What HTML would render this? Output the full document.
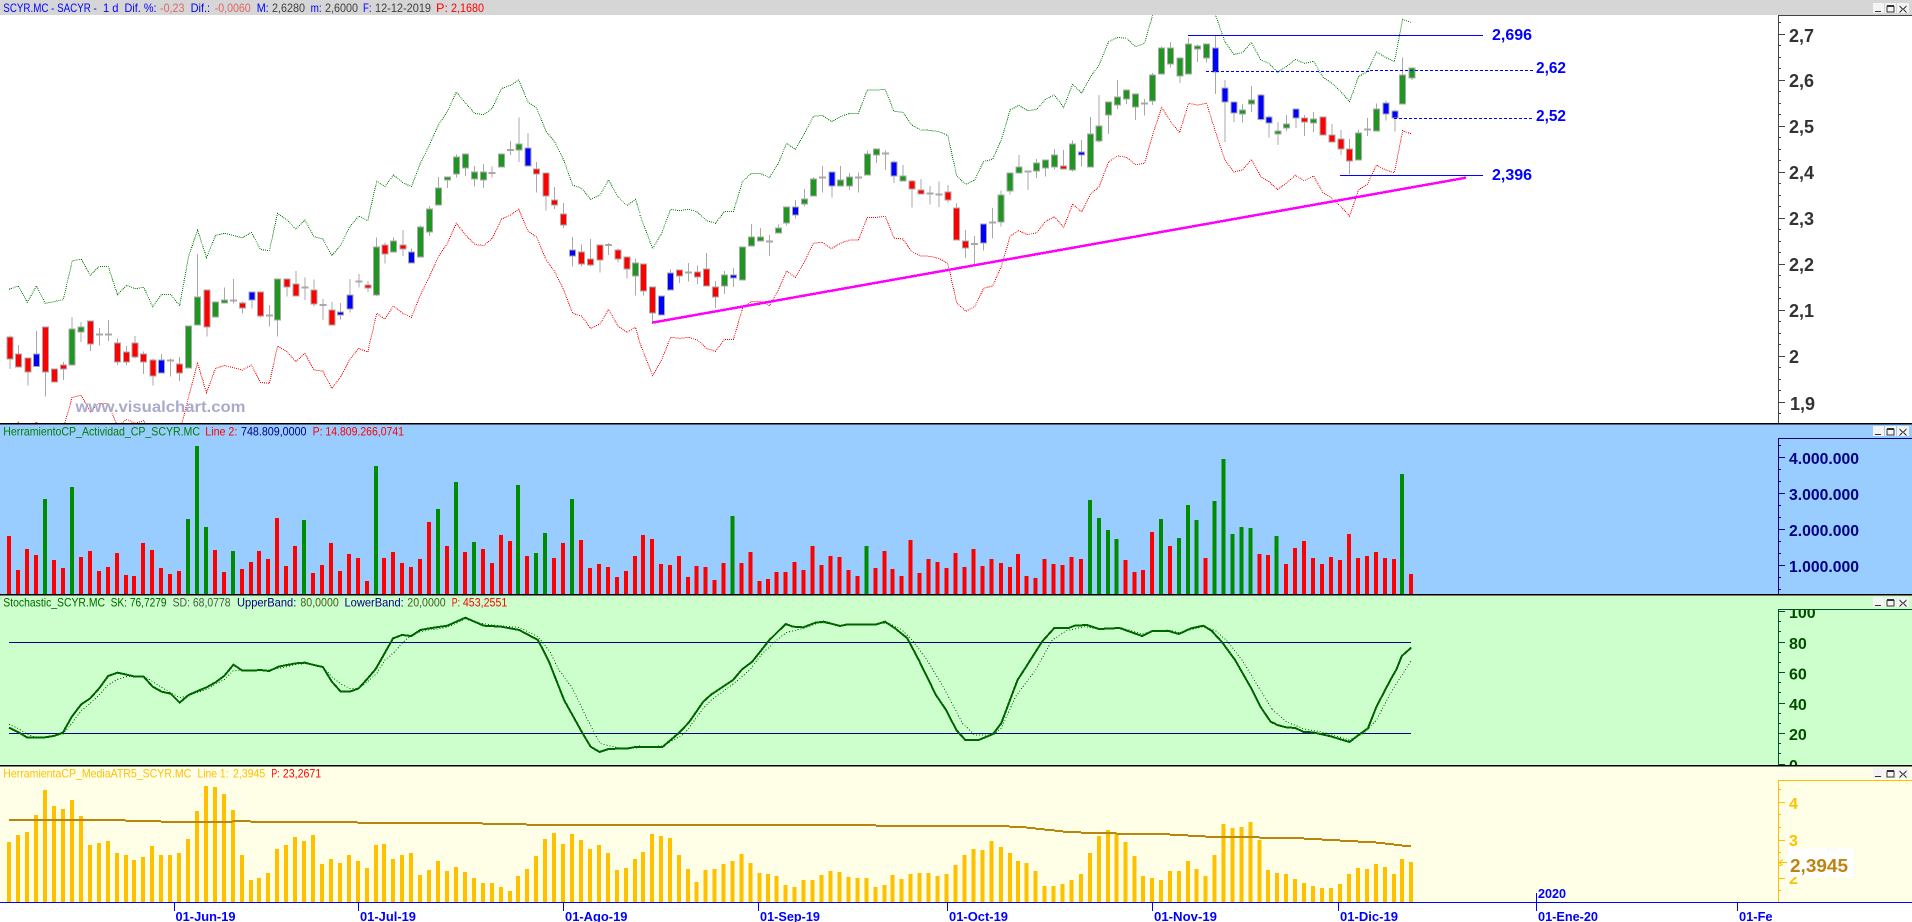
<!DOCTYPE html>
<html><head><meta charset="utf-8"><title>SCYR.MC</title>
<style>
html,body{margin:0;padding:0;background:#fff;overflow:hidden}
svg{display:block;font-family:"Liberation Sans",sans-serif}
path{vector-effect:non-scaling-stroke;fill:none}
text{white-space:pre}
.t{font-size:12px}
.ax{font-size:18px;font-weight:700;fill:#333}
.v{font-size:16px;font-weight:700;fill:#000080}
.s{font-size:16px;font-weight:700;fill:#004d00}
.y{font-size:16px;font-weight:700;fill:#ffc000}
.d{font-size:13px;font-weight:700;fill:#0000ff}
.l{font-size:16px;font-weight:700;fill:#0000ff}
.band-g{stroke:#008000;stroke-width:1;stroke-dasharray:1 1}
.band-r{stroke:#ff0000;stroke-width:1;stroke-dasharray:1 1}
.w{stroke:#a8a8a8;stroke-width:1}
.dj{stroke:#a8a8a8;stroke-width:7}
.o{stroke:#a8a8a8;stroke-width:7}
.gb{stroke:#1f961f;stroke-width:5}
.rb{stroke:#ff0000;stroke-width:5}
.bb{stroke:#0000ff;stroke-width:5}
.vr{stroke:#ff0000;stroke-width:4}
.vg{stroke:#008c00;stroke-width:4}
.at{stroke:#ffc000;stroke-width:4}
.al{stroke:#b8860b;stroke-width:2}
.sk{stroke:#006400;stroke-width:2}
.sd{stroke:#006400;stroke-width:1;stroke-dasharray:1 2}
</style></head>
<body>
<svg width="1912" height="922" viewBox="0 0 1912 922" shape-rendering="crispEdges">
<defs>
<g id="btn">
<rect x="1873" y="0" width="11" height="10" fill="#f4f4f4"/>
<rect x="1885" y="0" width="11" height="10" fill="#f4f4f4"/>
<rect x="1897" y="0" width="12" height="10" fill="#f4f4f4"/>
<path d="M1875 8.5H1881" stroke="#333" stroke-width="1"/>
<path d="M1887 3.5H1894V9H1887Z" stroke="#333" stroke-width="1"/>
<path d="M1887 3H1894" stroke="#333" stroke-width="2"/>
<path d="M1899.5 3L1906.5 9.5M1906.5 3L1899.5 9.5" stroke="#333" stroke-width="1"/>
</g>
<g id="ga">
<path id="ag" d="M177 988V1093M199 982V994M462 979V1102M484 892V973M528 907V949M550 901V907M680 838V958M923 742V884M964 724V754M1030 682V769M1052 628V694M1074 565V613M1096 532V538M1118 472V520M1141 463V502M1163 517V535M1185 517V538M1229 463V499M1271 433V448M1557 791V826"/>
<path id="ar" d="M24 1012V1075M45 1063V1099M68 1076V1114M112 982V1114M133 1108V1144M156 1096V1105M222 964V1030M288 1030V1084M310 1057V1084M331 1030V1069M352 1063V1084M375 1081V1126M440 1093V1117M507 871V979M594 910V922M638 877V946M703 838V859M725 853V886M769 871V910M813 931V973M901 856V862M943 737V760M987 736V745M1315 508V520M1338 520V586M1359 601V613M1381 644V673M1425 758V790M1447 779V793M1470 737V778M1514 752V775M1536 773V805"/>
<path id="ab" d="M89 1063V1098M396 1081V1117M617 878V898M834 937V943M857 886V925M1008 757V787M1293 446V496M1403 752V766"/>
</g>
<g id="gb">
<path id="bg" d="M207 826V856M251 742V838M273 712V736M295 712V721M339 685V697M359 622V667M403 598V610M425 538V586M491 541V556M513 532V556M557 463V523M580 448V463M644 529V541M885 586V664M907 520V571M928 502V517M972 490V511M993 481V502M1015 466V499M1060 433V508M1104 403V499M1125 379V421M1148 307V343M1170 292V313M1192 271V295M1214 283V319M1256 226V301M1278 145V220M1300 145V190M1323 175V226M1344 133V220M1366 139V145M1388 133V172M1476 331V341M1498 301V310M1563 394V400"/>
<path id="br" d="M9 793V871M31 862V937M97 811V826M141 817V829M163 808V856M185 862V889M666 544V565M688 571V580M754 577V598M776 625V718M798 724V742M1038 499V505"/>
<path id="bb" d="M53 889V943M75 820V868M229 826V832M381 622V643M470 517V556M622 487V526M842 673V727M1082 457V463M1410 145V214M1433 265V304M1455 307V337M1521 286V357M1541 352V367"/>
</g>
<g id="gc">
<path id="cg" d="M35 373V382M102 358V367M212 400V479M256 328V391M320 226V310M343 205V232"/>
<path id="cr" d="M80 355V364M125 352V403M147 406V424M169 418V445M190 449V481"/>
<path id="cb" d="M59 328V352M279 311V340M301 335V352"/>
</g>
</defs>

<!-- MAIN CHART -->
<rect x="0" y="0" width="1912" height="423" fill="#fff"/>
<g transform="scale(.40816 .33333)">
<path class="band-g" d="M22 868L45 858L67 907L89 858L111 910L133 905L155 899L177 783L199 777L221 826L243 799L265 799L288 884L310 856L331 866L352 862L374 920L396 883L418 883L440 917L462 770L484 690L506 773L528 706L550 700L594 713L616 697L638 748L660 752L680 640L703 660L725 688L747 660L769 710L791 717L813 767L835 735L857 680L879 648L901 662L923 543L943 560L964 525L987 548L1008 560L1030 490L1052 435L1074 375L1096 335L1118 276L1141 310L1163 340L1185 344L1206 325L1229 265L1251 256L1271 240L1293 305L1315 325L1338 395L1359 425L1381 480L1403 555L1425 565L1447 598L1470 585L1491 540L1514 590L1536 617L1557 598L1568 640"/>
<path class="band-r" d="M44 1266L67 1300L89 1266L111 1300L133 1295L155 1285L177 1192L199 1186L221 1235L243 1210L265 1210L288 1280L310 1258L331 1270L352 1262L374 1300L396 1285L418 1285L440 1300L462 1190L484 1090L506 1178L528 1105L550 1097L594 1110L616 1095L638 1147L660 1150L680 1038L703 1055L725 1085L747 1060L769 1110L791 1113L813 1165L835 1130L857 1078L879 1045L901 1056L923 940L943 957L964 918L987 940L1008 952L1030 885L1052 830L1074 770L1096 730L1118 670L1141 705L1163 733L1185 737L1206 715L1229 657L1251 645L1271 628L1293 692L1315 712L1338 780L1359 815L1381 870L1403 940L1425 948L1447 985L1470 972L1491 928L1514 978L1536 997L1557 982L1568 1030"/>
<path class="w" d="M24 1007V1107M45 1035V1100M68 1075V1157M89 993V1100M112 982V1190M133 1108V1144M156 1086V1140M177 951V1097M199 966V1026M222 964V1053M244 984V1037M266 960V1023M288 1015V1095M310 1038V1095M331 1008V1076M352 1055V1122M375 1075V1157M396 1062V1120M418 1075V1130M440 1071V1143M462 979V1102M484 762V975M507 871V1010M528 907V949M550 862V910M572 837V910M594 904V940M617 875V925M638 877V952M660 915V980M680 835V1010M703 838V890M725 813V890M747 833V900M769 838V920M791 897V960M813 906V975M834 909V958M857 837V937M879 822V862M901 843V876M923 712V888M943 727V790M964 712V756M987 690V768M1008 745V789M1030 676V772M1052 618V708M1074 531V615M1096 531V564M1118 464V532M1141 463V528M1163 498V560M1185 492V564M1206 500V532M1229 463V499M1251 423V465M1271 353V486M1293 399V498M1315 486V578M1338 517V632M1359 561V627M1381 609V684M1403 711V800M1425 733V800M1447 717V800M1470 737V818M1491 729V765M1514 745V788M1536 770V836M1557 775V887"/>
<path class="dj" d="M244 1001V1007M266 1000V1006M418 1079V1085M572 899V905M660 944V950M747 860V866M791 912V918M879 842V848M1206 516V522M1251 447V453M1491 732V738"/>
<use href="#ga" class="o" transform="translate(0 -3)"/>
<use href="#ga" class="o" transform="translate(0 3)"/>
<use href="#ag" class="gb"/><use href="#ar" class="rb"/><use href="#ab" class="bb"/>
</g>
<g transform="translate(640 0) scale(.40816 .33333)">
<path class="band-g" d="M0 645L31 746L53 700L75 628L97 632L119 628L141 636L163 662L185 670L207 634L229 634L251 545L273 520L295 520L317 533L339 490L359 430L381 448L403 400L425 349L447 346L469 365L491 350L513 340L535 340L557 270L580 270L601 268L622 334L644 337L666 375L688 390L710 391L732 395L754 406L776 528L798 553L820 540L842 484L864 478L885 420L907 330L928 316L950 332L972 328L993 298L1015 285L1038 322L1060 252L1082 280L1104 230L1125 195L1148 125L1170 112L1192 115L1214 140L1236 130L1256 45L1278 5L1300 0L1322 45L1344 0L1366 -5L1388 0L1410 45L1433 125L1455 163L1476 158L1498 127L1521 180L1541 190L1563 218"/>
<path class="band-r" d="M0 1030L31 1127L53 1080L75 1012L97 1015L119 1012L141 1020L163 1045L185 1054L207 1018L229 1018L251 925L273 904L295 904L317 917L339 870L359 813L381 832L403 785L425 730L447 727L469 746L491 730L513 720L535 720L557 652L580 652L601 649L622 714L644 717L666 755L688 768L710 769L732 775L754 790L776 908L798 934L820 920L842 865L864 858L885 800L907 708L928 692L950 704L972 698L993 665L1015 650L1038 682L1060 612L1082 636L1104 582L1125 560L1148 486L1170 468L1192 472L1214 494L1236 490L1256 405L1278 322L1300 365L1322 398L1344 310L1366 315L1388 310L1410 395L1433 480L1455 516L1476 510L1498 478L1521 530L1541 545L1563 570"/>
<path class="w" d="M9 793V887M31 862V969M53 889V943M75 808V870M97 811V849M119 789V845M141 796V852M163 759V860M185 843V924M207 813V882M229 804V861M251 742V838M273 672V738M295 684V723M317 705V768M339 673V701M359 622V677M381 600V656M403 567V620M425 531V588M447 498V578M470 517V593M491 498V558M513 519V570M535 517V578M557 451V527M580 448V489M601 451V510M622 481V549M644 495V543M666 540V623M688 537V583M710 558V614M732 544V621M754 555V608M776 609V718M798 690V774M820 708V795M842 673V752M864 624V716M885 571V680M907 520V584M928 465V518M950 515V570M972 477V534M993 481V530M1015 447V509M1038 450V507M1060 421V514M1082 420V500M1104 351V500M1125 285V428M1148 307V402M1170 240V327M1192 271V312M1214 280V360M1236 297V347M1256 219V315M1278 139V221M1300 126V203M1323 172V249M1344 114V222M1366 133V186M1388 133V188M1410 105V282M1433 240V426M1455 307V366M1476 312V368M1498 258V336M1521 282V362M1541 346V413M1563 366V435"/>
<path class="dj" d="M119 815V821M317 722V728M447 530V536M535 529V535M601 458V464M710 577V583M732 581V587M820 729V735M864 664V670M950 512V518M1236 307V313"/>
<use href="#gb" class="o" transform="translate(0 -3)"/>
<use href="#gb" class="o" transform="translate(0 3)"/>
<use href="#bg" class="gb"/><use href="#br" class="rb"/><use href="#bb" class="bb"/>
</g>
<g transform="translate(1272 0) scale(.40816 .33333)">
<path class="band-g" d="M13 217L35 200L57 178L79 190L102 184L125 232L147 250L169 275L190 305L212 230L234 214L256 156L278 172L300 185L320 58L342 68"/>
<path class="band-r" d="M13 568L35 550L57 526L79 542L102 528L125 578L147 595L169 620L190 648L212 570L234 552L256 495L278 510L300 518L320 392L342 402"/>
<path class="w" d="M35 345V393M59 328V384M80 345V408M102 336V396M125 352V403M147 372V425M169 390V465M190 417V522M212 390V480M234 354V408M256 310V392M279 301V362M301 328V395M320 172V310M343 205V240"/>
<path class="dj" d="M234 386V392"/>
<use href="#gc" class="o" transform="translate(0 -3)"/>
<use href="#gc" class="o" transform="translate(0 3)"/>
<use href="#cg" class="gb"/><use href="#cr" class="rb"/><use href="#cb" class="bb"/>
</g>
<path d="M1188 35.5H1483M1340 175.5H1483" stroke="#0000ff" stroke-width="1"/>
<path d="M1206 71.5H1370M1370 70.5H1533M1394 118.5H1533" stroke="#0000ff" stroke-width="1" stroke-dasharray="3 2"/>
<path d="M652 322.7L1466 177.7" stroke="#ff00ff" stroke-width="2.5"/>
<text class="l" x="1492" y="40" textLength="40" lengthAdjust="spacingAndGlyphs">2,696</text>
<text class="l" x="1536" y="73" textLength="30" lengthAdjust="spacingAndGlyphs">2,62</text>
<text class="l" x="1536" y="121" textLength="30" lengthAdjust="spacingAndGlyphs">2,52</text>
<text class="l" x="1492" y="180" textLength="40" lengthAdjust="spacingAndGlyphs">2,396</text>
<text x="75.5" y="412" font-size="16" font-weight="700" fill="#aaaacc" textLength="170" lengthAdjust="spacingAndGlyphs">www.visualchart.com</text>

<!-- main axis -->
<path d="M1778.5 15V423M1778 15.5H1912" stroke="#444" stroke-width="1"/>
<path d="M1778 34.5h7M1778 80.5h7M1778 126.5h7M1778 172.5h7M1778 218.5h7M1778 264.5h7M1778 310.5h7M1778 356.5h7M1778 402.5h7M1778 22.5h3M1778 45.5h3M1778 57.5h3M1778 68.5h3M1778 91.5h3M1778 103.5h3M1778 114.5h3M1778 137.5h3M1778 149.5h3M1778 160.5h3M1778 183.5h3M1778 195.5h3M1778 206.5h3M1778 229.5h3M1778 241.5h3M1778 252.5h3M1778 275.5h3M1778 287.5h3M1778 298.5h3M1778 321.5h3M1778 333.5h3M1778 344.5h3M1778 367.5h3M1778 379.5h3M1778 390.5h3M1778 413.5h3" stroke="#444" stroke-width="1"/>
<text class="ax" x="1789" y="42">2,7</text>
<text class="ax" x="1789" y="87">2,6</text>
<text class="ax" x="1789" y="133">2,5</text>
<text class="ax" x="1789" y="179">2,4</text>
<text class="ax" x="1789" y="225">2,3</text>
<text class="ax" x="1789" y="271">2,2</text>
<text class="ax" x="1789" y="317">2,1</text>
<text class="ax" x="1789" y="363">2</text>
<text class="ax" x="1790" y="410">1,9</text>

<!-- title bar -->
<rect x="0" y="0" width="1912" height="15" fill="#d6d6d6"/>
<path d="M1778 15.5H1912" stroke="#444" stroke-width="1"/>
<g class="t" fill="#0000ff">
<text x="3.3" y="12" textLength="93.5" lengthAdjust="spacingAndGlyphs">SCYR.MC - SACYR -</text>
<text x="103" y="12" textLength="15.5" lengthAdjust="spacingAndGlyphs">1 d</text>
<text x="124.5" y="12" textLength="32" lengthAdjust="spacingAndGlyphs">Dif. %:</text>
<text x="160" y="12" fill="#e06666" textLength="24.5" lengthAdjust="spacingAndGlyphs">-0,23</text>
<text x="190.6" y="12" textLength="19.5" lengthAdjust="spacingAndGlyphs">Dif.:</text>
<text x="214.7" y="12" fill="#e06666" textLength="36" lengthAdjust="spacingAndGlyphs">-0,0060</text>
<text x="256.7" y="12" textLength="12" lengthAdjust="spacingAndGlyphs">M:</text>
<text x="272" y="12" fill="#404040" textLength="33" lengthAdjust="spacingAndGlyphs">2,6280</text>
<text x="310.6" y="12" textLength="11" lengthAdjust="spacingAndGlyphs">m:</text>
<text x="325" y="12" fill="#404040" textLength="33" lengthAdjust="spacingAndGlyphs">2,6000</text>
<text x="363" y="12" textLength="8.5" lengthAdjust="spacingAndGlyphs">F:</text>
<text x="375" y="12" fill="#404040" textLength="56" lengthAdjust="spacingAndGlyphs">12-12-2019</text>
<text x="436" y="12" fill="#ff0000" textLength="12" lengthAdjust="spacingAndGlyphs">P:</text>
<text x="451" y="12" fill="#ff0000" textLength="33" lengthAdjust="spacingAndGlyphs">2,1680</text>
</g>
<use href="#btn" transform="translate(0 3)"/>

<!-- VOLUME PANEL -->
<rect x="0" y="423" width="1912" height="172" fill="#99ccff"/>
<path d="M0 423.5H1912" stroke="#000" stroke-width="1.5"/>
<g transform="translate(0 420) scale(.40816 .33333)">
<path class="vr" d="M22 348V522M44 450V522M66 387V522M88 405V522M132 420V522M154 444V522M198 411V522M220 393V522M242 453V522M264 441V522M287 399V522M309 465V522M328 468V522M350 369V522M372 390V522M394 444V522M416 462V522M438 453V522M527 390V522M549 456V522M593 447V522M615 426V522M635 393V522M657 417V522M679 294V522M701 438V522M723 378V522M767 459V522M789 435V522M811 369V522M833 453V522M855 402V522M877 414V522M899 483V522M941 414V522M963 396V522M985 429V522M1007 441V522M1029 417V522M1051 306V522M1095 378V522M1139 396V522M1183 387V522M1205 429V522M1227 345V522M1249 363V522M1291 408V522M1357 414V522M1379 369V522M1423 360V522M1445 444V522M1467 432V522M1489 441V522M1512 471V522M1534 453V522M1556 408V522"/>
<path class="vg" d="M110 237V522M176 201V522M461 297V522M483 78V522M505 321V522M571 393V522M745 300V522M921 138V522M1073 267V522M1117 186V522M1161 366V522M1269 195V522M1313 399V522M1335 339V522M1401 237V522"/>
</g>
<g transform="translate(640 420) scale(.40816 .33333)">
<path class="vr" d="M7 345V522M29 357V522M51 432V522M73 435V522M95 408V522M117 471V522M139 438V522M161 441V522M183 480V522M205 429V522M249 429V522M271 396V522M293 483V522M313 477V522M335 456V522M357 456V522M379 426V522M401 450V522M423 378V522M445 435V522M467 408V522M489 411V522M511 450V522M533 468V522M577 444V522M599 393V522M619 447V522M641 468V522M663 360V522M685 459V522M707 417V522M729 426V522M751 444V522M773 399V522M795 441V522M817 387V522M839 438V522M861 417V522M884 429V522M906 441V522M926 402V522M947 468V522M969 474V522M991 417V522M1013 432V522M1035 435V522M1057 411V522M1080 417V522M1190 420V522M1212 456V522M1232 450V522M1254 336V522M1298 378V522M1386 414V522M1518 402V522M1538 405V522"/>
<path class="vg" d="M227 288V522M555 378V522M1102 240V522M1124 294V522M1146 330V522M1168 357V522M1276 297V522M1320 354V522M1342 255V522M1364 300V522M1408 243V522M1430 117V522M1452 342V522M1474 321V522M1496 324V522M1560 348V522"/>
</g>
<g transform="translate(1272 420) scale(.40816 .33333)">
<path class="vr" d="M34 432V522M56 384V522M78 363V522M100 414V522M122 432V522M144 411V522M166 420V522M189 342V522M211 414V522M233 408V522M255 396V522M277 414V522M299 417V522M341 462V522"/>
<path class="vg" d="M319 162V522"/>
</g>
<path d="M1778.5 438V594M1778 438.5H1912" stroke="#000080" stroke-width="1"/>
<path d="M1778 457.5h7M1778 493.5h7M1778 529.5h7M1778 565.5h7M1778 445.5h3M1778 469.5h3M1778 481.5h3M1778 505.5h3M1778 517.5h3M1778 541.5h3M1778 553.5h3M1778 577.5h3M1778 589.5h3" stroke="#000080" stroke-width="1"/>
<text class="v" x="1789" y="464" textLength="70" lengthAdjust="spacingAndGlyphs">4.000.000</text>
<text class="v" x="1789" y="500" textLength="70" lengthAdjust="spacingAndGlyphs">3.000.000</text>
<text class="v" x="1789" y="536" textLength="70" lengthAdjust="spacingAndGlyphs">2.000.000</text>
<text class="v" x="1789" y="572" textLength="70" lengthAdjust="spacingAndGlyphs">1.000.000</text>
<g class="t">
<text x="3.3" y="435.5" fill="#008000" textLength="196.7" lengthAdjust="spacingAndGlyphs">HerramientoCP_Actividad_CP_SCYR.MC</text>
<text x="205.3" y="435.5" fill="#ff0000" textLength="32" lengthAdjust="spacingAndGlyphs">Line 2:</text>
<text x="241" y="435.5" fill="#000080" textLength="65.5" lengthAdjust="spacingAndGlyphs">748.809,0000</text>
<text x="312.6" y="435.5" fill="#ff0000" textLength="91.4" lengthAdjust="spacingAndGlyphs">P: 14.809.266,0741</text>
</g>
<use href="#btn" transform="translate(0 426)"/>

<!-- STOCHASTIC PANEL -->
<rect x="0" y="594" width="1912" height="172" fill="#ccffcc"/>
<path d="M0 594.5H1912" stroke="#000" stroke-width="1.5"/>
<path d="M9 642.5H1411M9 733.5H1411" stroke="#000080" stroke-width="1"/>
<g transform="translate(0 660) scale(.40816 .33333)">
<path class="sd" d="M22 193L44 205L66 222L88 232L110 232L132 228L154 222L176 190L199 152L221 130L243 105L265 75L288 58L310 50L331 48L352 48L374 65L396 82L418 98L440 113L462 108L484 97L506 88L528 73L550 58L572 32L594 30L616 30L638 30L660 30L682 25L703 20L725 13L747 11L769 15L791 20L813 50L835 72L857 85L879 85L901 65L923 40L943 0L965 -22L985 -50L1008 -75L1030 -85L1052 -90L1096 -98L1140 -123L1185 -108L1228 -102L1272 -98L1318 -70L1350 -20L1368 28L1400 80L1440 180L1470 250L1491 257L1513 263L1535 266L1557 264L1568 262"/>
<path class="sk" d="M22 203L44 216L66 232L88 232L110 232L132 228L154 218L176 170L199 133L221 115L243 85L265 48L288 38L310 44L331 50L352 50L374 80L396 95L418 101L440 128L462 105L484 93L506 82L528 67L550 47L572 14L594 32L616 32L638 30L660 33L682 20L703 15L725 10L747 8L769 15L791 21L813 65L835 95L857 95L879 85L901 55L920 28L940 -15L963 -65L985 -75L1008 -72L1030 -90L1052 -95L1096 -103L1140 -127L1185 -103L1228 -100L1272 -90L1318 -60L1345 5L1382 120L1425 215L1447 260L1469 276L1491 267L1513 266L1535 266L1557 261L1568 260"/>
</g>
<g transform="translate(640 660) scale(.40816 .33333)">
<path class="sd" d="M0 262L55 258L75 245L110 220L155 145L175 120L228 72L250 50L270 28L300 -20L345 -70L360 -83L400 -95L440 -112L490 -105L577 -108L610 -110L640 -92L670 -55L703 0L745 85L790 190L820 225L865 225L885 205L920 110L970 28L1010 -60L1045 -88L1090 -100L1125 -93L1175 -98L1230 -78L1255 -85L1295 -90L1320 -82L1380 -100L1410 -88L1440 -55L1475 0L1520 90L1550 150"/>
<path class="sk" d="M0 261L55 261L75 240L97 217L120 187L155 125L175 103L228 60L250 28L275 5L317 -60L357 -108L375 -100L400 -98L430 -112L450 -115L490 -102L505 -106L577 -106L600 -115L625 -95L655 -65L683 0L725 105L750 150L775 210L797 240L830 240L865 222L885 190L925 60L942 28L985 -55L1015 -96L1050 -96L1065 -103L1095 -105L1125 -93L1175 -96L1230 -72L1255 -87L1295 -87L1320 -78L1350 -95L1380 -103L1400 -88L1425 -55L1458 0L1500 90L1520 140L1545 185L1552 190"/>
</g>
<g transform="translate(1272 660) scale(.40816 .33333)">
<path class="sd" d="M0 148L35 185L78 207L122 216L168 232L190 240L225 220L256 180L290 100L340 3"/>
<path class="sk" d="M0 186L13 195L35 202L57 204L78 216L100 217L122 223L144 229L168 238L190 246L212 225L235 205L256 140L290 60L305 28L318 -12L341 -37"/>
</g>
<path d="M1778.5 609V765M1778 609.5H1912" stroke="#005030" stroke-width="1"/>
<path d="M1778 611.5h7M1778 642.5h7M1778 672.5h7M1778 703.5h7M1778 733.5h7M1778 764.5h7M1778 621.5h3M1778 631.5h3M1778 652.5h3M1778 662.5h3M1778 682.5h3M1778 692.5h3M1778 713.5h3M1778 723.5h3M1778 743.5h3M1778 753.5h3" stroke="#005030" stroke-width="1"/>
<text class="s" x="1789" y="618">100</text>
<text class="s" x="1789" y="649">80</text>
<text class="s" x="1789" y="679.5">60</text>
<text class="s" x="1789" y="710">40</text>
<text class="s" x="1789" y="740">20</text>
<text class="s" x="1789" y="771">0</text>
<rect x="1786" y="596" width="60" height="13" fill="#ccffcc"/>
<g class="t">
<text x="3.3" y="606.5" fill="#006400" textLength="101.7" lengthAdjust="spacingAndGlyphs">Stochastic_SCYR.MC</text>
<text x="110.6" y="606.5" fill="#006400" textLength="56" lengthAdjust="spacingAndGlyphs">SK: 76,7279</text>
<text x="172.6" y="606.5" fill="#406040" textLength="58" lengthAdjust="spacingAndGlyphs">SD: 68,0778</text>
<text x="237" y="606.5" fill="#000080" textLength="59.3" lengthAdjust="spacingAndGlyphs">UpperBand:</text>
<text x="300.4" y="606.5" fill="#406020" textLength="38.4" lengthAdjust="spacingAndGlyphs">80,0000</text>
<text x="344.5" y="606.5" fill="#000080" textLength="59.2" lengthAdjust="spacingAndGlyphs">LowerBand:</text>
<text x="407.3" y="606.5" fill="#406020" textLength="38.4" lengthAdjust="spacingAndGlyphs">20,0000</text>
<text x="451.8" y="606.5" fill="#ff0000" textLength="8.2" lengthAdjust="spacingAndGlyphs">P:</text>
<text x="462.9" y="606.5" fill="#ff0000" textLength="44.4" lengthAdjust="spacingAndGlyphs">453,2551</text>
</g>
<use href="#btn" transform="translate(0 597)"/>

<!-- ATR PANEL -->
<rect x="0" y="765" width="1912" height="137" fill="#ffffe8"/>
<rect x="0" y="902" width="1912" height="20" fill="#fff"/>
<path d="M0 765.5H1912" stroke="#000" stroke-width="1.5"/>
<g transform="translate(0 660) scale(.40816 .33333)">
<path class="at" d="M22 546V726M44 525V726M66 516V726M88 465V726M110 390V726M132 438V726M154 447V726M176 420V726M198 468V726M220 555V726M242 549V726M264 543V726M287 579V726M309 585V726M328 600V726M350 591V726M372 558V726M394 585V726M416 585V726M438 579V726M461 537V726M483 453V726M505 378V726M527 381V726M549 402V726M571 450V726M593 585V726M615 660V726M635 654V726M657 639V726M679 567V726M701 555V726M723 531V726M745 543V726M767 525V726M789 612V726M811 597V726M833 609V726M855 585V726M877 603V726M899 624V726M921 555V726M941 552V726M963 597V726M985 585V726M1007 579V726M1029 645V726M1051 630V726M1073 603V726M1095 633V726M1117 621V726M1139 636V726M1161 654V726M1183 669V726M1205 669V726M1227 681V726M1249 693V726M1269 648V726M1291 627V726M1313 588V726M1335 537V726M1357 519V726M1379 552V726M1401 522V726M1423 540V726M1445 567V726M1467 555V726M1489 579V726M1512 630V726M1534 624V726M1556 597V726"/>
<path class="al" d="M22 480H308M308 483H394M394 486H570M570 483H614M614 486H876M876 489H1182M1182 492H1290M1290 495H1568"/>
</g>
<g transform="translate(640 660) scale(.40816 .33333)">
<path class="at" d="M7 576V726M29 522V726M51 528V726M73 534V726M95 585V726M117 627V726M139 666V726M161 630V726M183 627V726M205 612V726M227 603V726M249 582V726M271 609V726M293 639V726M313 642V726M335 648V726M357 675V726M379 681V726M401 660V726M423 660V726M445 645V726M467 633V726M489 636V726M511 651V726M533 654V726M555 654V726M577 681V726M599 675V726M619 645V726M641 657V726M663 642V726M685 639V726M707 639V726M729 648V726M751 642V726M773 615V726M795 585V726M817 567V726M839 570V726M861 543V726M884 561V726M906 579V726M926 603V726M947 609V726M969 633V726M991 678V726M1013 678V726M1035 672V726M1057 660V726M1080 642V726M1102 579V726M1124 528V726M1146 510V726M1168 522V726M1190 546V726M1212 588V726M1232 648V726M1254 654V726M1276 660V726M1298 633V726M1320 633V726M1342 603V726M1364 627V726M1386 648V726M1408 585V726M1430 492V726M1452 504V726M1474 501V726M1496 486V726M1518 540V726M1538 630V726"/>
<path class="al" d="M0 495H578M578 498H905M905 501H947M947 504H969M969 507H991M991 510H1015M1015 513H1036M1036 516H1080M1080 519H1168M1168 522H1298M1298 525H1342M1342 528H1386M1386 531H1518M1518 534H1568"/>
</g>
<g transform="translate(1272 660) scale(.40816 .33333)">
<path class="at" d="M12 639V726M34 642V726M56 657V726M78 669V726M100 678V726M122 684V726M144 684V726M166 672V726M189 642V726M211 624V726M233 627V726M255 612V726M277 621V726M299 642V726M319 597V726M341 606V726"/>
<path class="al" d="M20 534H78M78 537H122M122 540H166M166 543H211M211 546H255M255 549H277M277 552H299M299 555H318M318 558H341"/>
</g>
<path d="M1778.5 780V902M1778 780.5H1912" stroke="#ffc000" stroke-width="1"/>
<path d="M1778 802.5h7M1778 840.5h7M1778 878.5h7M1778 789.5h3M1778 814.5h3M1778 827.5h3M1778 852.5h3M1778 865.5h3M1778 890.5h3" stroke="#ffc000" stroke-width="1"/>
<text class="y" x="1789" y="809">4</text>
<text class="y" x="1789" y="846">3</text>
<text class="y" x="1789" y="884">2</text>
<rect x="1788" y="848" width="66" height="29" fill="#fff"/>
<path d="M1779 862.5H1787M1779 862.5L1783 859.5M1779 862.5L1783 865.5" stroke="#ffc000" stroke-width="1"/>
<text x="1790" y="872" font-size="18" font-weight="700" fill="#bf8410" textLength="58" lengthAdjust="spacingAndGlyphs">2,3945</text>
<g class="t">
<text x="3.3" y="777.5" fill="#ffc000" textLength="188" lengthAdjust="spacingAndGlyphs">HerramientaCP_MediaATR5_SCYR.MC</text>
<text x="197.5" y="777.5" fill="#ffc000" textLength="31" lengthAdjust="spacingAndGlyphs">Line 1:</text>
<text x="233" y="777.5" fill="#ffc000" textLength="32.3" lengthAdjust="spacingAndGlyphs">2,3945</text>
<text x="271.4" y="777.5" fill="#ff0000" textLength="8.2" lengthAdjust="spacingAndGlyphs">P:</text>
<text x="282.9" y="777.5" fill="#ff0000" textLength="38.3" lengthAdjust="spacingAndGlyphs">23,2671</text>
</g>
<use href="#btn" transform="translate(0 768)"/>

<!-- DATE AXIS -->
<text class="d" x="175.5" y="921" textLength="60" lengthAdjust="spacingAndGlyphs">01-Jun-19</text>
<text class="d" x="360" y="921" textLength="56" lengthAdjust="spacingAndGlyphs">01-Jul-19</text>
<text class="d" x="565" y="921" textLength="62.5" lengthAdjust="spacingAndGlyphs">01-Ago-19</text>
<text class="d" x="760" y="921" textLength="60" lengthAdjust="spacingAndGlyphs">01-Sep-19</text>
<text class="d" x="949" y="921" textLength="59" lengthAdjust="spacingAndGlyphs">01-Oct-19</text>
<text class="d" x="1154" y="921" textLength="63" lengthAdjust="spacingAndGlyphs">01-Nov-19</text>
<text class="d" x="1340" y="921" textLength="58" lengthAdjust="spacingAndGlyphs">01-Dic-19</text>
<text class="d" x="1538" y="921" textLength="60" lengthAdjust="spacingAndGlyphs">01-Ene-20</text>
<text class="d" x="1739" y="921" textLength="60" lengthAdjust="spacingAndGlyphs">01-Feb-20</text>
<rect x="1772" y="903" width="140" height="19" fill="#fff"/>
<text class="d" x="1538" y="898" textLength="28" lengthAdjust="spacingAndGlyphs">2020</text>
<path d="M0 902.5H1912" stroke="#0000ff" stroke-width="1"/>
<path d="M174.5 902V911M358.5 902V911M563.5 902V911M758.5 902V911M947.5 902V911M1152.5 902V911M1338.5 902V911M1536.5 893V911M1737.5 902V911" stroke="#0000ff" stroke-width="1"/>
</svg>
</body></html>
